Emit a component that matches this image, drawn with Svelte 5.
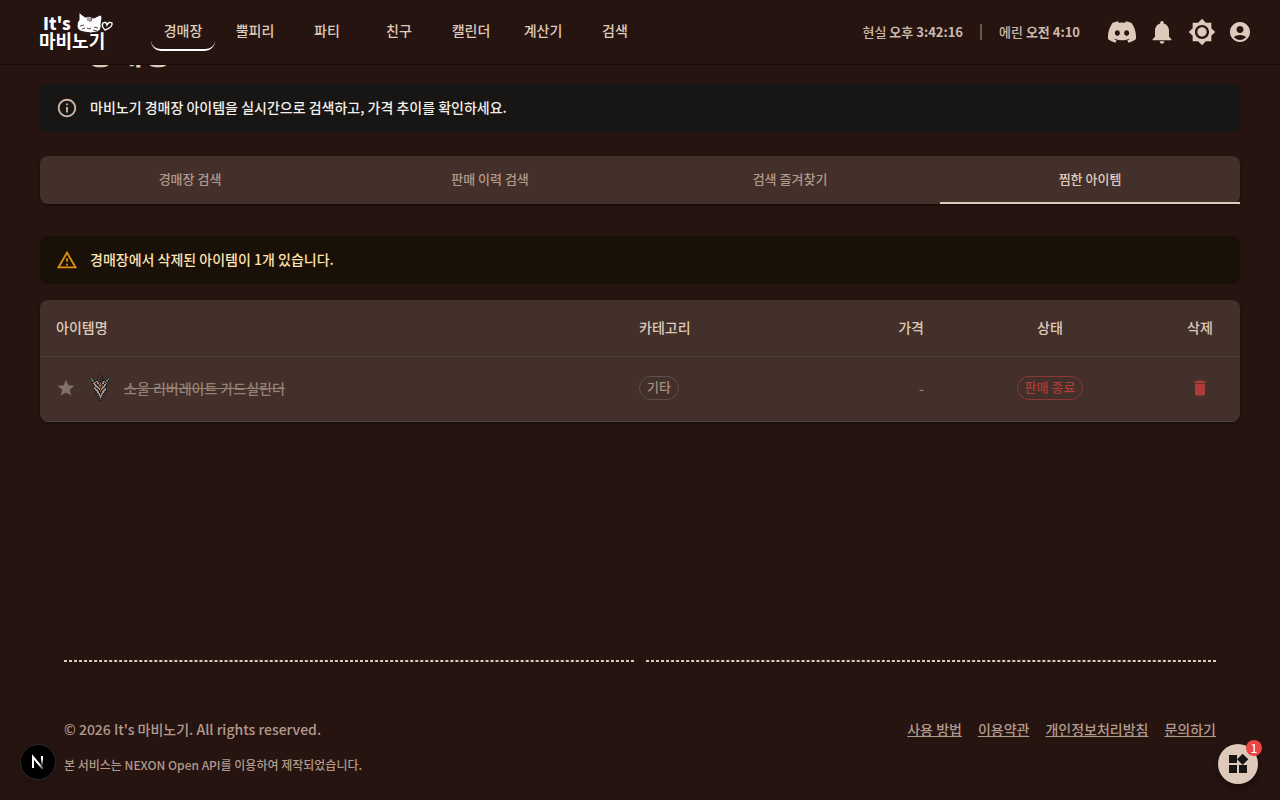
<script lang="ts">
    const navItems = ["경매장", "뿔피리", "파티", "친구", "캘린더", "계산기", "검색"];
    const tabs = ["경매장 검색", "판매 이력 검색", "검색 즐겨찾기", "찜한 아이템"];
    const footerLinks = ["사용 방법", "이용약관", "개인정보처리방침", "문의하기"];

    let activeNav = $state("경매장");
    let activeTab = $state("찜한 아이템");
    let items = $state([
        { name: "소울 리버레이트 가드실린더", category: "기타", price: "-", status: "판매 종료" }
    ]);

    // item sprite, one letter per pixel
    const palette: Record<string, string> = {
        k: "#2a201d",
        g: "#5f5855",
        w: "#a0958f",
        t: "#3f7565",
        r: "#6e2f24",
        o: "#b56a3c"
    };
    const sprite = [
        ".........k........",
        "........krk.......",
        ".......kkgkk......",
        "k......kgkkk.....k",
        "tk....kkrkgkk...kt",
        "ttk...kgkkkkk..ktt",
        "tttk.kkkgkrkkkkttk",
        "kttkkwwkkkkkwwkttk",
        ".kkwwkwgkrkgwkwkk.",
        ".kwwkkwwkokwwkkwk.",
        "..kwwkkgrogkkwwk..",
        "..kgwwkkooktkwgk..",
        "..kkwwwktoktwwkk..",
        "..kwkgwwkrkwwgkk..",
        "..kwwkkwwkwwkkwk..",
        "...kwwgkwkwkgwwk..",
        "...kgwwkkokkwwgk..",
        "...kkgwwkgkwwgkk..",
        "....kkwwkkkwwkk...",
        "....kgkwwkwwkgk...",
        ".....kkgwkwgkk....",
        ".....kgkwwwkgk....",
        "......kkgwgkk.....",
        "......kgkwkgk.....",
        ".......kkgkk......",
        "........kgk.......",
        "........kkk.......",
        ".........k........"
    ];
    const pixels = sprite.flatMap((row, y) =>
        [...row].map((c, x) => ({ x, y, fill: palette[c] })).filter((p) => p.fill)
    );

    function removeItem(name: string) {
        items = items.filter((item) => item.name !== name);
    }
</script>

<div class="page">
    <header>
        <a href="#home" class="logo" aria-label="It's 마비노기">
            <svg width="78" height="40" viewBox="0 0 78 40">
                <text x="7" y="18" font-size="17" font-weight="900">It's</text>
                <text x="3" y="36" font-size="18" font-weight="700">마비노기</text>
                <path d="M43 1Q44 0 45 2L49 5Q54 4 58 6L64 3Q66 3 66 6L65 12Q66 18 61 20Q55 22 48 20Q41 19 41 14Q41 10 43 8Z" stroke="#261411" />
                <path d="M52 6v3M54 6v4M56 6l-1 3M44 14l4-1M46 17l3-1M58 15l4 1M57 18l4 1M51 16l2 1 2-1" fill="none" stroke="#261411" stroke-width="0.8" />
                <path d="M69 18Q65 14 67 11Q70 9 71 13Q73 9 76 11Q77 15 69 18Z" fill="none" stroke="#fff" stroke-width="1.4" />
            </svg>
        </a>
        <nav>
            {#each navItems as item}
                <a href="#{item}" class:active={activeNav === item} onclick={() => (activeNav = item)}>{item}</a>
            {/each}
        </nav>
        <div class="clock">
            <span>현실 <b>오후 3:42:16</b></span>
            <span class="divider"></span>
            <span>에린 <b>오전 4:10</b></span>
        </div>
        <div class="actions">
            <a href="#discord" aria-label="디스코드">
                <svg width="28" height="28" viewBox="0 0 24 24"><path d="M20.317 4.37a19.79 19.79 0 0 0-4.885-1.515.074.074 0 0 0-.079.037c-.21.375-.444.864-.608 1.25a18.27 18.27 0 0 0-5.487 0 12.64 12.64 0 0 0-.617-1.25.077.077 0 0 0-.079-.037A19.736 19.736 0 0 0 3.677 4.37a.07.07 0 0 0-.032.027C.533 9.046-.32 13.58.099 18.057a.082.082 0 0 0 .031.057 19.9 19.9 0 0 0 5.993 3.03.078.078 0 0 0 .084-.028 14.09 14.09 0 0 0 1.226-1.994.076.076 0 0 0-.041-.106 13.107 13.107 0 0 1-1.872-.892.077.077 0 0 1-.008-.128 10.2 10.2 0 0 0 .372-.292.074.074 0 0 1 .077-.01c3.928 1.793 8.18 1.793 12.062 0a.074.074 0 0 1 .078.01c.12.098.246.198.373.292a.077.077 0 0 1-.006.127 12.299 12.299 0 0 1-1.873.892.077.077 0 0 0-.041.107c.36.698.772 1.362 1.225 1.993a.076.076 0 0 0 .084.028 19.839 19.839 0 0 0 6.002-3.03.077.077 0 0 0 .032-.054c.5-5.177-.838-9.674-3.549-13.66a.061.061 0 0 0-.031-.03zM8.02 15.33c-1.183 0-2.157-1.085-2.157-2.419 0-1.333.956-2.419 2.157-2.419 1.21 0 2.176 1.096 2.157 2.42 0 1.333-.956 2.418-2.157 2.418zm7.975 0c-1.183 0-2.157-1.085-2.157-2.419 0-1.333.955-2.419 2.157-2.419 1.21 0 2.176 1.096 2.157 2.42 0 1.333-.946 2.418-2.157 2.418z" /></svg>
            </a>
            <button aria-label="알림">
                <svg width="28" height="28" viewBox="0 0 24 24"><path d="M12 22c1.1 0 2-.9 2-2h-4c0 1.1.89 2 2 2m6-6v-5c0-3.07-1.64-5.64-4.5-6.32V4c0-.83-.67-1.5-1.5-1.5s-1.5.67-1.5 1.5v.68C7.63 5.36 6 7.92 6 11v5l-2 2v1h16v-1z" /></svg>
            </button>
            <button aria-label="테마 변경">
                <svg width="28" height="28" viewBox="0 0 24 24"><path d="M20 8.69V4h-4.69L12 .69 8.69 4H4v4.69L.69 12 4 15.31V20h4.69L12 23.31 15.31 20H20v-4.69L23.31 12zM12 18c-3.31 0-6-2.69-6-6s2.69-6 6-6 6 2.69 6 6-2.69 6-6 6m0-10c-2.21 0-4 1.79-4 4s1.79 4 4 4 4-1.79 4-4-1.79-4-4-4" /></svg>
            </button>
            <button class="account" aria-label="내 계정">
                <svg width="24" height="24" viewBox="0 0 24 24"><path d="M12 2C6.48 2 2 6.48 2 12s4.48 10 10 10 10-4.48 10-10S17.52 2 12 2m0 4c1.93 0 3.5 1.57 3.5 3.5S13.93 13 12 13s-3.5-1.57-3.5-3.5S10.07 6 12 6m0 14c-2.03 0-4.43-.82-6.14-2.88C7.55 15.8 9.68 15 12 15s4.45.8 6.14 2.12C16.43 19.18 14.03 20 12 20" /></svg>
            </button>
        </div>
    </header>

    <main>
        <h1>경매장</h1>

        <div class="alert info">
            <svg width="22" height="22" viewBox="0 0 24 24"><path d="M11 7h2v2h-2zm0 4h2v6h-2zm1-9C6.48 2 2 6.48 2 12s4.48 10 10 10 10-4.48 10-10S17.52 2 12 2m0 18c-4.41 0-8-3.59-8-8s3.59-8 8-8 8 3.59 8 8-3.59 8-8 8" /></svg>
            <span>마비노기 경매장 아이템을 실시간으로 검색하고, 가격 추이를 확인하세요.</span>
        </div>

        <div class="tabs" role="tablist">
            {#each tabs as tab}
                <button role="tab" aria-selected={activeTab === tab} class:active={activeTab === tab} onclick={() => (activeTab = tab)}>{tab}</button>
            {/each}
        </div>

        <div class="alert warning">
            <svg width="22" height="22" viewBox="0 0 24 24"><path d="M12 5.99 19.53 19H4.47zM12 2 1 21h22zm1 14h-2v2h2zm0-6h-2v4h2z" /></svg>
            <span>경매장에서 삭제된 아이템이 {items.length}개 있습니다.</span>
        </div>

        <div class="card">
            <table>
                <thead>
                    <tr>
                        <th>아이템명</th>
                        <th class="category">카테고리</th>
                        <th class="price">가격</th>
                        <th class="status">상태</th>
                        <th class="remove">삭제</th>
                    </tr>
                </thead>
                <tbody>
                    {#each items as item}
                        <tr>
                            <td>
                                <div class="item">
                                    <button class="star" aria-label="찜 해제">
                                        <svg width="20" height="20" viewBox="0 0 24 24"><path d="M12 17.27 18.18 21l-1.64-7.03L22 9.24l-7.19-.61L12 2 9.19 8.63 2 9.24l5.46 4.73L5.82 21z" /></svg>
                                    </button>
                                    <svg class="sprite" width="18" height="28" viewBox="0 0 18 28" shape-rendering="crispEdges">
                                        {#each pixels as p}
                                            <rect x={p.x} y={p.y} width="1" height="1" fill={p.fill} />
                                        {/each}
                                    </svg>
                                    <s>{item.name}</s>
                                </div>
                            </td>
                            <td><span class="chip">{item.category}</span></td>
                            <td class="price">{item.price}</td>
                            <td class="status"><span class="chip ended">{item.status}</span></td>
                            <td class="remove">
                                <button aria-label="삭제" onclick={() => removeItem(item.name)}>
                                    <svg width="20" height="20" viewBox="0 0 24 24"><path d="M6 19c0 1.1.9 2 2 2h8c1.1 0 2-.9 2-2V7H6zM19 4h-3.5l-1-1h-5l-1 1H5v2h14z" /></svg>
                                </button>
                            </td>
                        </tr>
                    {/each}
                </tbody>
            </table>
        </div>
    </main>

    <footer>
        <div class="dashes"><hr /><hr /></div>
        <div class="footer-row">
            <p>© 2026 It's 마비노기. All rights reserved.</p>
            <div class="links">
                {#each footerLinks as link}
                    <a href="#{link}">{link}</a>
                {/each}
            </div>
        </div>
        <p class="notice">본 서비스는 NEXON Open API를 이용하여 제작되었습니다.</p>
    </footer>

    <button class="dev" aria-label="개발 도구">
        <svg width="34" height="34" viewBox="0 0 34 34">
            <defs>
                <linearGradient id="stem" x1="0" y1="0" x2="0" y2="1">
                    <stop offset="0.3" stop-color="#fff" />
                    <stop offset="1" stop-color="#fff" stop-opacity="0" />
                </linearGradient>
                <linearGradient id="slash" x1="0" y1="0" x2="1" y2="1">
                    <stop offset="0.6" stop-color="#fff" />
                    <stop offset="1" stop-color="#fff" stop-opacity="0.2" />
                </linearGradient>
            </defs>
            <path d="M12 23V12L22 24" fill="none" stroke="url(#slash)" stroke-width="2" />
            <rect x="20" y="11" width="2" height="10" fill="url(#stem)" />
        </svg>
    </button>

    <button class="fab" aria-label="위젯">
        <svg width="24" height="24" viewBox="0 0 24 24"><path d="M13 13v8h8v-8zM3 21h8v-8H3zM3 3v8h8V3zm13.66-1.31L11 7.34 16.66 13l5.66-5.66z" /></svg>
        <span class="badge">1</span>
    </button>
</div>

<style>
    :global(body) {
        background: #261411;
    }

    .page {
        display: flex;
        flex-direction: column;
        min-height: 100vh;
        color: #decabb;
        font-family: "Noto Sans CJK KR", sans-serif;
        font-size: 14px;
        font-weight: 500;
        line-height: 20px;
    }
    button {
        display: flex;
        align-items: center;
        justify-content: center;
        margin: 0;
        padding: 0;
        border: 0;
        background: none;
        color: inherit;
        font: inherit;
        cursor: pointer;
    }
    a {
        color: inherit;
        text-decoration: none;
    }
    p {
        margin: 0;
    }
    svg {
        display: block;
        flex-shrink: 0;
        fill: currentColor;
    }

    header {
        position: fixed;
        top: 0;
        left: 0;
        right: 0;
        z-index: 10;
        display: flex;
        align-items: center;
        box-sizing: border-box;
        height: 65px;
        padding: 0 22px 0 36px;
        background: #261411;
        border-bottom: 1px solid #180c0a;
    }
    .logo {
        margin-right: 37px;
    }
    .logo svg {
        fill: #fff;
    }
    nav {
        display: flex;
        gap: 8px;
    }
    nav a {
        box-sizing: border-box;
        width: 64px;
        height: 38px;
        border-bottom: 2px solid transparent;
        border-radius: 10px;
        line-height: 34px;
        text-align: center;
    }
    nav a.active {
        border-color: #fff;
    }
    .clock {
        display: flex;
        align-items: center;
        gap: 17px;
        margin-left: auto;
        color: #cdb9aa;
        font-size: 13px;
    }
    .clock b {
        font-weight: 700;
    }
    .divider {
        width: 2px;
        height: 16px;
        background: #6b564e;
    }
    .actions {
        display: flex;
        align-items: center;
        margin-left: 22px;
    }
    .actions a,
    .actions button {
        display: flex;
        justify-content: center;
        width: 40px;
    }
    .actions .account {
        width: 36px;
    }

    main {
        flex: 1;
        padding: 30px 40px 0;
    }
    h1 {
        margin: 0 0 14px;
        padding-left: 44px;
        font-size: 32px;
        line-height: 40px;
    }
    .alert {
        display: flex;
        align-items: center;
        gap: 12px;
        height: 48px;
        padding: 0 16px;
        border-radius: 8px;
    }
    .alert span {
        padding-bottom: 2px;
    }
    .info {
        background: #171614;
        color: #f5efea;
    }
    .info svg {
        color: #cdb6a6;
    }
    .warning {
        background: #191107;
        color: #ffe2b0;
    }
    .warning svg {
        color: #e0900f;
    }
    .tabs {
        display: flex;
        margin: 24px 0 32px;
        border-radius: 8px;
        background: #44302a;
        box-shadow: 0 1px 2px #00000099;
    }
    .tabs button {
        flex: 1;
        box-sizing: border-box;
        height: 48px;
        border-bottom: 2px solid transparent;
        color: #b29a8b;
        font-size: 13px;
    }
    .tabs button.active {
        border-color: #decabb;
        color: #decabb;
    }

    .card {
        margin-top: 16px;
        overflow: hidden;
        border-radius: 8px;
        background: #44302a;
        box-shadow: 0 1px 2px #00000099;
    }
    table {
        width: 100%;
        border-collapse: separate;
        border-spacing: 0;
        table-layout: fixed;
    }
    th,
    td {
        box-sizing: border-box;
        padding: 0 16px;
        text-align: left;
    }
    th {
        height: 57px;
        padding-bottom: 2px;
        border-bottom: 1px solid #494238;
        font-weight: 500;
    }
    td {
        height: 65px;
        padding-bottom: 2px;
        border-bottom: 1px solid #554540;
        color: #958074;
    }
    .category {
        width: 157px;
    }
    .price {
        width: 160px;
        text-align: right;
    }
    .status {
        width: 220px;
        text-align: center;
    }
    .remove {
        width: 80px;
        text-align: center;
    }
    .remove button {
        margin: auto;
        color: #ad3d3b;
    }
    .item {
        display: flex;
        align-items: center;
    }
    .star {
        color: #7f706c;
    }
    .sprite {
        margin: 0 15px;
    }
    .chip {
        display: inline-block;
        box-sizing: border-box;
        height: 24px;
        padding: 0 7px;
        border: 1px solid #5b504e;
        border-radius: 12px;
        color: #a38e81;
        font-size: 13px;
        line-height: 20px;
        vertical-align: middle;
    }
    .ended {
        border-color: #8c3733;
        color: #ad3d3b;
    }

    footer {
        padding: 0 64px 26px;
        color: #b29a8b;
    }
    .dashes {
        display: flex;
        gap: 12px;
        margin-bottom: 57px;
    }
    hr {
        flex: 1;
        margin: 0;
        border: 1px dashed #decabb;
    }
    .footer-row {
        display: flex;
        justify-content: space-between;
        margin-bottom: 17px;
    }
    .links {
        display: flex;
        gap: 16px;
    }
    .links a {
        text-decoration: underline;
    }
    .notice {
        font-size: 12px;
        line-height: 18px;
    }

    .dev {
        position: fixed;
        left: 20px;
        bottom: 20px;
        width: 36px;
        height: 36px;
        border: 1px solid #2c2a2a;
        border-radius: 50%;
        background: #000;
        box-shadow: 0 8px 16px #0000001f;
    }
    .fab {
        position: fixed;
        right: 22px;
        bottom: 16px;
        width: 40px;
        height: 40px;
        border-radius: 50%;
        background: #decabb;
        color: #171614;
        box-shadow: 0 3px 8px #00000080;
    }
    .badge {
        position: absolute;
        top: -4px;
        right: -4px;
        width: 16px;
        height: 16px;
        border-radius: 50%;
        background: #ef4444;
        color: #fff;
        font-size: 12px;
        line-height: 16px;
    }
</style>
